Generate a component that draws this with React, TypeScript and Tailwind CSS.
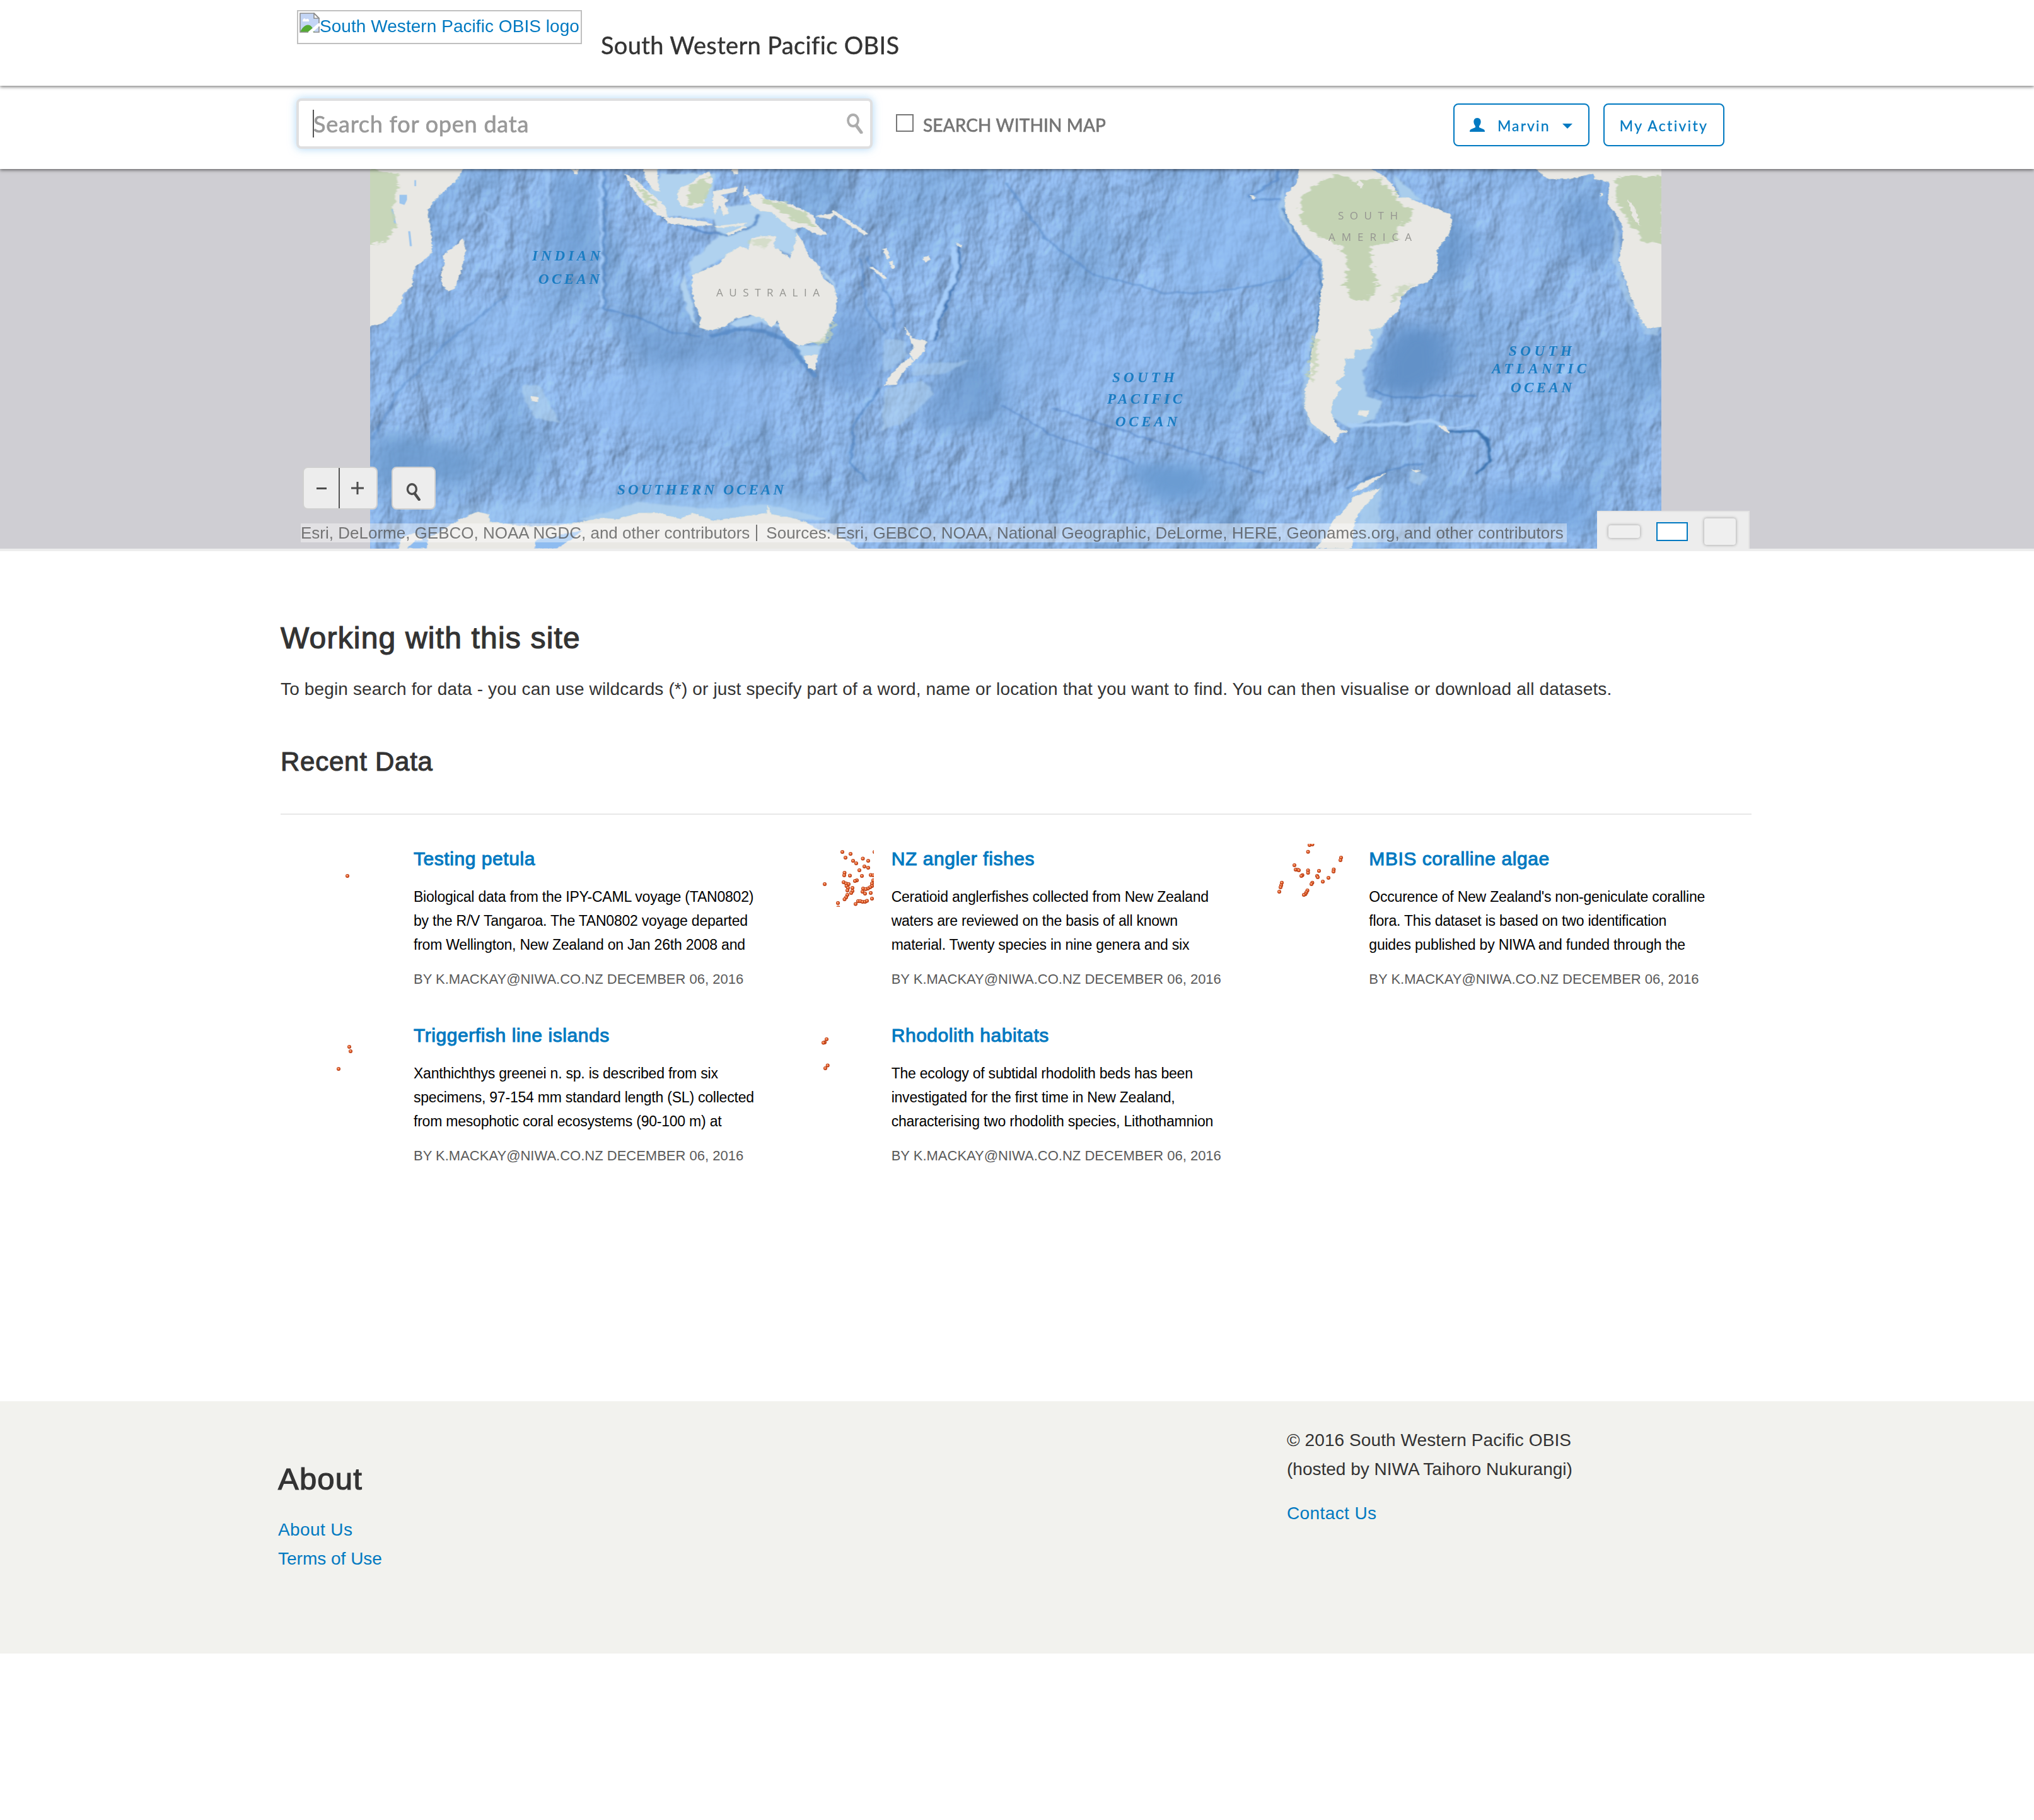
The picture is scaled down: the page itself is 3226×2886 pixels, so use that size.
type Dot = [number, number];
type Card = { title: string; lines: string[]; dots: Dot[] };

const cards: Card[] = [
  {
    title: "Testing petula",
    lines: [
      "Biological data from the IPY-CAML voyage (TAN0802)",
      "by the R/V Tangaroa. The TAN0802 voyage departed",
      "from Wellington, New Zealand on Jan 26th 2008 and",
    ],
    dots: [[73, 51]],
  },
  {
    title: "NZ angler fishes",
    lines: [
      "Ceratioid anglerfishes collected from New Zealand",
      "waters are reviewed on the basis of all known",
      "material. Twenty species in nine genera and six",
    ],
    dots: [
      [72, 64], [100, 13], [113, 16], [105, 22], [117, 27], [122, 31], [132.5, 23.5], [141, 27], [151, 13], [135, 36], [141, 38],
      [127, 42], [103.5, 46], [103, 50], [112, 50.5], [131, 51], [145, 49.5], [149, 50], [123, 58], [120, 59], [102, 61], [106, 63],
      [110, 64], [106.6, 67], [109, 70], [116, 70], [108, 74], [116, 75], [114, 78], [108, 81], [106, 85], [103.5, 88], [93, 94],
      [93.5, 101], [149, 58], [147, 63], [147, 67], [144, 69], [140.5, 71], [133, 71], [137, 72], [132, 76], [136, 79], [145, 78],
      [147, 87], [125, 91], [128.5, 91], [132, 92], [136, 92], [139, 90.5], [121, 95.5],
    ],
  },
  {
    title: "MBIS coralline algae",
    lines: [
      "Occurence of New Zealand's non-geniculate coralline",
      "flora. This dataset is based on two identification",
      "guides published by NIWA and funded through the",
    ],
    dots: [
      [84, 2], [88.5, 1], [81.6, 12.7], [134, 22], [133, 26], [60, 34], [62, 41], [65.4, 41.3], [67, 42], [81.6, 42.3], [81.6, 46],
      [99, 43], [122.4, 40.7], [122, 44], [72.7, 49.7], [71, 51], [96, 51], [97, 53], [114, 54], [105, 60], [88.4, 61.7], [87, 64],
      [40, 61.7], [39, 66], [38, 69], [36, 76], [80.6, 74], [79, 77], [77.5, 79.7], [75, 81],
    ],
  },
  {
    title: "Triggerfish line islands",
    lines: [
      "Xanthichthys greenei n. sp. is described from six",
      "specimens, 97-154 mm standard length (SL) collected",
      "from mesophotic coral ecosystems (90-100 m) at",
    ],
    dots: [[76, 42], [78, 49], [59, 77]],
  },
  {
    title: "Rhodolith habitats",
    lines: [
      "The ecology of subtidal rhodolith beds has been",
      "investigated for the first time in New Zealand,",
      "characterising two rhodolith species, Lithothamnion",
    ],
    dots: [[75, 30], [72, 35], [70, 35.5], [76.7, 71.6], [73, 76]],
  },
];

function Thumb({ dots }: { dots: Dot[] }) {
  return (
    <svg className="mt-[2px] mr-7 h-[100px] w-[150px] shrink-0" viewBox="0 0 150 100">
      {dots.map(([x, y], i) => (
        <g key={i}>
          <circle cx={x} cy={y} r="3" fill="#b5380f" />
          <circle cx={x - 0.2} cy={y - 0.3} r="2" fill="#ee7340" />
          <circle cx={x - 0.5} cy={y - 0.8} r="1" fill="#fbb28c" />
        </g>
      ))}
    </svg>
  );
}

function Magnifier({ className }: { className: string }) {
  return (
    <svg className={className} viewBox="0 0 28 32" fill="none" stroke="currentColor">
      <ellipse cx="11" cy="11" rx="8" ry="9" strokeWidth="3.8" />
      <path d="M16 19l8 11" strokeWidth="5" strokeLinecap="round" />
    </svg>
  );
}

function BrokenImage() {
  return (
    <svg className="mt-[2px] ml-[2px] h-8 w-8 shrink-0" viewBox="0 0 32 32">
      <path d="M1 1h22l8 8v22H1z" fill="#c3d5f5" />
      <path d="M5 13c0-4 4-5 5-2 3-3 6 0 5 3H5z" fill="#fff" />
      <path d="M1 31c4-9 10-13 15-11 3 1 6 6 8 11z" fill="#54ab34" />
      <path d="M32 15v6L20 32h-8z" fill="#fff" />
      <path d="M23 1v8h8z" fill="#fff" stroke="#8e8e8e" strokeWidth="1.6" />
      <path d="M31 17V9l-8-8H1v30h13M22 31h9v-9" fill="none" stroke="#8e8e8e" strokeWidth="1.6" />
    </svg>
  );
}

const mapLabels: [string, number, number, number, boolean][] = [
  ["INDIAN", 844, 413, 108, true],
  ["OCEAN", 854, 450, 97, true],
  ["AUSTRALIA", 1136, 470, 164, false],
  ["SOUTHERN OCEAN", 979, 784, 264, true],
  ["SOUTH", 1764, 606, 99, true],
  ["PACIFIC", 1756, 640, 119, true],
  ["OCEAN", 1769, 676, 98, true],
  ["SOUTH", 2122, 348, 95, false],
  ["AMERICA", 2107, 382, 132, false],
  ["SOUTH", 2393, 564, 100, true],
  ["ATLANTIC", 2366, 592, 150, true],
  ["OCEAN", 2396, 622, 97, true],
];

function WorldMap() {
  return (
    <svg className="mx-auto block h-[602px] w-[2048px] -translate-x-[2px]" viewBox="587 268 2048 602">
      <defs>
        <filter id="relief" x="0" y="0" width="100%" height="100%" colorInterpolationFilters="sRGB">
          <feTurbulence type="fractalNoise" baseFrequency="0.024 0.016" numOctaves="4" seed="11" result="n" />
          <feDiffuseLighting in="n" surfaceScale="5.5" diffuseConstant="1.22" lightingColor="#94bbee" result="l">
            <feDistantLight azimuth="225" elevation="54" />
          </feDiffuseLighting>
          <feGaussianBlur stdDeviation="0.7" />
        </filter>
        <filter id="swell" x="0" y="0" width="100%" height="100%" colorInterpolationFilters="sRGB">
          <feTurbulence type="fractalNoise" baseFrequency="0.006 0.005" numOctaves="3" seed="21" />
          <feColorMatrix values="0 0 0 0 0.4  0 0 0 0 0.59  0 0 0 0 0.79  2.6 0 0 0 -1.1" />
        </filter>
        <filter id="rough" x="-5%" y="-5%" width="110%" height="110%">
          <feTurbulence type="fractalNoise" baseFrequency="0.09" numOctaves="3" seed="4" />
          <feDisplacementMap in="SourceGraphic" scale="9" xChannelSelector="R" yChannelSelector="G" />
        </filter>
        <filter id="soft" x="-20%" y="-20%" width="140%" height="140%">
          <feGaussianBlur stdDeviation="30" />
        </filter>
        <filter id="soft2" x="-20%" y="-20%" width="140%" height="140%">
          <feTurbulence type="fractalNoise" baseFrequency="0.03" numOctaves="3" seed="9" />
          <feDisplacementMap in="SourceGraphic" scale="16" xChannelSelector="R" yChannelSelector="G" />
          <feGaussianBlur stdDeviation="2.5" />
        </filter>
        <filter id="veg" x="-10%" y="-10%" width="120%" height="120%">
          <feTurbulence type="fractalNoise" baseFrequency="0.05" numOctaves="4" seed="8" />
          <feDisplacementMap in="SourceGraphic" scale="34" xChannelSelector="R" yChannelSelector="G" />
          <feGaussianBlur stdDeviation="1.5" />
        </filter>
      </defs>
      <rect x="587" y="268" width="2048" height="602" fill="#82abdb" />
      <rect x="587" y="268" width="2048" height="602" filter="url(#relief)" opacity="0.68" />
      <rect x="587" y="268" width="2048" height="602" filter="url(#swell)" opacity="0.45" />

      {/* basins and shelves, western half */}
      <g transform="translate(560 260) scale(.657 .3954)">
        <g filter="url(#soft)">
          <path d="M480 30h110v320l-60 60-70-80z" fill="#6d9cd3" opacity=".6" />
          <path d="M600 590l140 70 120 20 120-30 90 80 30 90-200 10-200-30z" fill="#6796cc" opacity=".5" />
          <path d="M41 1080l170 20 100 80-40 90-230 20z" fill="#6a9ace" opacity=".8" />
          <path d="M1170 560l60 20 50 200-20 120-80 20-60-60z" fill="#6896cf" opacity=".5" />
          <path d="M1420 820l148-10v230l-140 40-70-40z" fill="#6a98cf" opacity=".6" />
          <path d="M560 870l330-100 150 60v200l-300 60-200-60z" fill="#8fbcf2" opacity=".55" />
          <path d="M260 560l250 10-80 200-180 20z" fill="#8fbcf2" opacity=".5" />
          <path d="M200 1400l400-50 500-10 100 90H200z" fill="#9cc6f2" opacity=".9" />
        </g>
        <g filter="url(#soft2)" fill="#b0d2ef">
          <path d="M740 40l130 0 0 140 130-30 60 100 25 60-15 60-80-40-110 60-60 60-10-50 70-110-10-70-110-10-60-60z" />
          <path d="M800 440l15 90 15 110 10 30-30-70-20-100zM1100 380l50 70 20 60-12-20z" />
          <path d="M910 640l60-35 50 20 10 30-50-20-60 20z" />
          <path d="M1285 900l90-30 30 50-80 120-50 30z" opacity=".55" />
          <path d="M1280 700l50 10 10 60-60 70z" opacity=".5" />
          <path d="M1350 800l100-5 40-5-60 50-80 5z" opacity=".5" />
          <path d="M410 880l40 10 30 90 20 60-60-20-30-80z" opacity=".6" />
          <path d="M540 1430l150-75 160 30 150-20 150 60z" opacity=".8" />
          <path d="M1070 730h60l-10 50-35 5z" />
        </g>
        <g fill="none" strokeLinecap="round" filter="url(#soft2)">
          <path d="M1450 340q10 90-15 170t-40 190" stroke="#a5cdfa" strokeWidth="14" />
          <path d="M1462 330q8 100-18 190t-42 190" stroke="#3f74b3" strokeWidth="5" />
          <path d="M660 50l60 110 40 70 80 40 60 15 70-40 10-40" stroke="#4d80c0" strokeWidth="7" opacity=".8" />
          <path d="M607 30v550l90 40 60 50 80 20" stroke="#5386c4" strokeWidth="6" opacity=".7" />
          <path d="M598 30v540" stroke="#a3caf8" strokeWidth="6" />
          <path d="M470 30v210M320 190l40 50 5 100-30 90" stroke="#9dc7f6" strokeWidth="9" opacity=".8" />
          <path d="M600 590l-60 100-80 60-120 100-120 240" stroke="#93bff3" strokeWidth="14" opacity=".6" />
          <path d="M370 530l-140 180-120 200-60 190" stroke="#5588c6" strokeWidth="7" opacity=".5" />
          <path d="M865 690q100-60 180 20l50 100 20 40" stroke="#4f83c2" strokeWidth="14" opacity=".7" />
          <path d="M1225 380l15 200 45 100M1240 370l60 180 10 110" stroke="#5a8cca" strokeWidth="5" opacity=".7" />
          <path d="M1270 900l-60 140-10 160 40 70" stroke="#4f83c2" strokeWidth="6" opacity=".7" />
        </g>
        <g fill="#e9e8e4" stroke="#e3e6d6" strokeWidth="1" filter="url(#rough)">
          <path d="M20 10h250l-20 55-35 50-25 45-10 30 5 60 5 50v55l-15 25-25 30-7 40v40l-21 25-7 45-20 45-25 35-50 20z" />
          <path d="M265 300l7 50-10 70-17 80-15 10-15-20-2-50 9-40-7-30 25-35 15-15z" />
          <path d="M655 40l25 20 40 60 35 50 2 45-22-10-35-55-32-70z" />
          <path d="M700 15h35v60l5 35-15-5-17-40z" />
          <path d="M790 95l25-15 20-30 25-20 8 40-18 50-5 45-25 15-30-15-8-35z" />
          <path d="M750 216l40 2 60 13 18 14-46 4-62-12zM872 250l78-14-10 12-60 8zM900 282l45-34 4 6-40 32z" />
          <path d="M870 110l60-18-4 18-40 15 20 22-10 10 12 38-12 12-12-42-12 36-4-50zM945 88l12 32-16 12z" />
          <path d="M955 125l30-5 15 25 35 5 40 25 35 30 10 40 25 38-25 0-35-30-25 10-25-35-25-35-25-5-25-25z" />
          <path d="M1118 210l37-10 5-16 8 10-16 28zM1165 192l38 42 40 46-8 4-40-44-36-44z" />
          <path d="M820 445l30-20 35-25 15-35 35-35 20 15 5-45 25-10h35l-5 40 40 50 10-50 7-50 13 30 15 60 25 40 10 50 25 30 8 40-3 70-15 50-15 65h-25l-35 15-25-30-20-40-5-35-15 30-20-35-30-15-40 15-20 30-40 18-25-13 5-35-15-60-7-60z" />
          <path d="M1088 770l34-5-7 60-15-5z" />
          <path d="M1330 652l22 48 33 10-10 50-20 30-12-30 12-25z" />
          <path d="M1345 775l8 15-28 50-15 45-27 2 17-47 25-40z" />
          <path d="M1248 415l8-2 32 44-6 4zM1278 342l10-2 8 38-8 2zM1294 390l8 0 5 28-6 0zM1376 378l16-10 2 14-14 12zM1455 318l16 10-4 6zM430 932l18 4-2 18-14-4zM915 20l14 0 0 22-12-4zM528 22h18l-8 20z" />
          <path d="M105 1560l15-65 30-15 20 30 40-35 30-35 25-20 35-25 25 10 5 30 50 10 50 10 90-10 80-25 40 5 50-25h50l50 25 30-25 50 30 90-20 40-10v-30l10 35 50 15 30 15 30 30 50 25 30 30 30 35z" />
        </g>
        <g fill="#8ebcf0">
          <path d="M438 1542l4-34 50-16 60-22-20 30-40 42zM130 1542l20-30 30-10-2 40z" filter="url(#rough)" />
          <path d="M112 124h18v20l-6 20-12-6zM90 180l6 0 8 60-6 2zM133 270l5 0 4 60-5 0zM148 65h4v24h-4z" fill="#9cc5ee" />
        </g>
        <g fill="#c3d4b4" filter="url(#veg)" opacity=".9">
          <path d="M20 20l90 20-5 90-10 60 10 40-20 80-65 20z" />
          <path d="M810 90l45-45 8 40-18 70-40 15z" />
          <path d="M985 140l60 20 50 40 20 50-50-20-30-40-40-30z" />
          <path d="M680 70l50 80 10 30-30-30z" />
          <path d="M960 300h50l-10 30h-40z" opacity=".6" />
          <path d="M1105 715l30-5 20-80 6 0-10 80-26 20z" opacity=".7" />
        </g>
      </g>

      {/* basins and shelves, eastern half */}
      <g transform="translate(1590 260) scale(.676 .3954)">
        <g filter="url(#soft)">
          <path d="M870 780l60-140 120 30 10 180-100 100-90-50z" fill="#6291c8" />
          <path d="M270 1200h200l40 120-140 50z" fill="#6a9bd2" />
          <path d="M1130 1300l250-30v200h-250z" fill="#6e9ed8" opacity=".6" />
          <path d="M1000 180l60 30 60 150-60 120-80-20z" fill="#6694cc" opacity=".6" />
          <path d="M1340 120l80 60 20 160-110 60z" fill="#6694cc" opacity=".5" />
          <path d="M390 30l90 80-90 100v280l80 30 200-60 80-120-90-220z" fill="#8dbaf0" opacity=".55" />
          <path d="M1180 60h70l-10 500-90 20z" fill="#94c0f4" opacity=".6" />
          <path d="M0 560l400-60 10 200 60 200-220 60-250-60z" fill="#90bcf2" opacity=".4" />
          <path d="M900 1270l-60 270h-100l60-200z" fill="#9cc6f2" />
        </g>
        <g filter="url(#soft2)" fill="#a9cdec">
          <path d="M905 620l-25 100-35 110 5 100 40 20-20 70-60 40-60-70 30-220 60-100 50-40z" />
          <path d="M915 40l40 60 30 50-50-10z" />
          <path d="M655 90l-8 110 60 150 35 50 0 170-25 180-15 190 10 100 50 60-30-80 10-400 15-210-60-110z" opacity=".7" />
          <path d="M960 1225l40 30-20 30-30-20zM890 1290l-10 250h-50l10-160z" opacity=".7" />
          <path d="M1425 170l25 110-5 120 25 120 30 110 20 30 20-10 0 40-30-10-60-180-20-120 8-110z" opacity=".7" />
        </g>
        <g fill="none" strokeLinecap="round" filter="url(#soft2)">
          <path d="M658 180l50 160 36 60 4 120-10 180-20 90" stroke="#4679b8" strokeWidth="7" opacity=".75" />
          <path d="M815 1050l130-10 60-10 40 30" stroke="#a9cff6" strokeWidth="14" />
          <path d="M1050 1075l60-5 30 40 4 80-30 50" stroke="#3b72ae" strokeWidth="8" />
          <path d="M1040 1060l60-10" stroke="#a5cbf6" strokeWidth="8" />
          <path d="M870 910q50 40 130 20l110 0" stroke="#4d80bf" strokeWidth="6" opacity=".7" />
          <path d="M10 80l90 220 110 140 180 80 120-10 160-50 70-140" stroke="#5d8fcc" strokeWidth="6" opacity=".7" />
          <path d="M1440 420l-40 60-60 120-80 60M1400 430l-60 130-100 70" stroke="#a2c9f7" strokeWidth="9" opacity=".5" />
          <path d="M120 980l180 100 180 90 130 70M0 970l120 120 190 110" stroke="#5384c4" strokeWidth="6" opacity=".6" />
          <path d="M805 1300l80-60 60-30 40-10" stroke="#4d80bf" strokeWidth="6" opacity=".7" />
          <path d="M580 130l60-60 10-40M590 145l60-5" stroke="#5384c4" strokeWidth="7" opacity=".7" />
        </g>
        <g fill="#e9e8e4" stroke="#e3e6d6" strokeWidth="1" filter="url(#rough)">
          <path d="M697 10l-7 70-25 40-3 70 18 55 30 80 40 60 2 75-7 100-5 100-15 100-5 100-10 40v80l15 60 35 45 20 35 10-35 20-13-20-7-20-65 5-50 20-50-15-20 20-30 5-70h20v-35l40-5 3-45-8-30 30-10 15-30 25-40 5-50 25-40 40-25 20-45v-80l30-70 5-50-5-25-65-40-35-25h-20l-10-40-20-40-40-40z" />
          <path d="M1245 10l20 30 15 20h50l55-22 5 22 35 15-5 85 20 40 15 50v60l-10 80 20 90 15 80 20 70 15 30 45-10V10z" />
          <path d="M836 988l24 2-6 22-20-6zM1022 1048l14 2 14 30-10-6zM580 126l16 8-8 10zM1402 118l6 2-4 12z" />
          <path d="M885 1300l-20 45-30 55-10 45-5 97h-85l25-50 15-60 30-50 20-50zM960 1225l20 6-10 6zM840 1280l60-40-50 60-30 15z" />
        </g>
        <g fill="#c0d2b0" filter="url(#veg)" opacity=".92">
          <path d="M780 40l50 30 50-10 35 50 15 50 40 20-15 40-25 40-5 50-60 20 0 70 15 80-20 70-45-10-15-60 10-80-10-60-60-50-40-60 0-80 30-60z" />
          <path d="M1440 50h110v270l-50-10-40-100-20-60z" />
          <path d="M728 690h10v130l-15 60-4-20zM960 480l-30 60-20 20 15-70z" opacity=".7" />
        </g>
        <path d="M836 62l12 20-6 16-10-18zM1466 140l20 40 10 70-16-30z" fill="#e9e8e4" filter="url(#rough)" />
      </g>

      {mapLabels.map(([text, x, y, w, sea], i) => (
        <text
          key={i}
          x={x}
          y={y}
          textLength={w}
          className={
            sea
              ? "fill-[#1a7cc2] [font-family:'Liberation_Serif',serif] text-[23px] font-bold italic"
              : "fill-[#959591] [font-family:'Open_Sans',sans-serif] text-[17px] font-medium"
          }
        >
          {text}
        </text>
      ))}
    </svg>
  );
}

export default function App() {
  return (
    <div className="min-h-[2886px] w-full bg-white [font-family:'Liberation_Sans',Arial,sans-serif] text-[28px] text-[#333]">
      <header className="relative z-20 flex h-[136px] bg-white pl-[471px] shadow-[0_2px_5px_rgba(0,0,0,0.5)]">
        <a className="mt-4 flex h-[54px] w-[452px] border-2 border-[#c0c0c0] text-[#0079c1]">
          <BrokenImage />
          <span className="mt-[7px] leading-[34px] tracking-[0.05px] whitespace-nowrap">South Western Pacific OBIS logo</span>
        </a>
        <h1 className="mt-[46px] ml-[30px] [font-family:Lato,sans-serif] text-[38px] leading-[50px] tracking-[0.35px] whitespace-nowrap [-webkit-text-stroke:0.4px_#333]">
          South Western Pacific OBIS
        </h1>
      </header>

      <nav className="relative z-10 flex h-[132px] bg-white pl-[470px] [font-family:Lato,sans-serif] shadow-[0_2px_5px_rgba(0,0,0,0.5)]">
        <div className="mt-5 flex h-[80px] w-[914px] items-center rounded-lg border-4 border-[#dfdfe0] bg-white pr-[9px] pl-[22px] shadow-[0_0_14px_rgba(120,190,240,0.6)]">
          <span className="h-11 w-[2px] bg-[#555]" />
          <span className="-ml-[1px] text-[36px] leading-[50px] tracking-[0.77px] whitespace-nowrap text-[#999] [-webkit-text-stroke:0.7px_#999]">Search for open data</span>
          <Magnifier className="ml-auto h-8 w-[30px] text-[#adadad]" />
        </div>
        <span className="mt-[45px] ml-[37px] h-7 w-7 border-2 border-[#777]" />
        <span className="mt-[44px] ml-[15px] text-[28px] leading-9 tracking-[0.15px] whitespace-nowrap text-[#757575] [-webkit-text-stroke:0.7px_#757575]">SEARCH WITHIN MAP</span>
        <div className="mt-7 mr-[491px] ml-auto flex gap-[22px] text-[23px] text-[#0079c1] [-webkit-text-stroke:0.3px_#0079c1]">
          <button className="flex h-[68px] w-[216px] items-center rounded-lg border-2 border-[#0079c1] pl-6">
            <svg className="h-6 w-6" viewBox="0 0 24 24" fill="currentColor">
              <path d="M12 1c4 0 6 3 5.600 7-.4 3-1.600 4.500-2.600 6v2l7 3c1.500.7 2 2 2 4H0c0-2 .5-3.300 2-4l7-3v-2C8 12.500 6.800 11 6.400 8 6 4 8 1 12 1z" />
            </svg>
            <span className="mt-[2px] ml-[20px] tracking-[2.1px]">Marvin</span>
            <svg className="mt-1 ml-[19px] h-2 w-4" viewBox="0 0 16 8" fill="currentColor">
              <path d="M0 0h16L8 8z" />
            </svg>
          </button>
          <button className="flex h-[68px] w-[192px] items-center justify-center rounded-lg border-2 border-[#0079c1]">
            <span className="mt-[2px] tracking-[2.3px] whitespace-nowrap">My Activity</span>
          </button>
        </div>
      </nav>

      <section className="relative h-[606px] overflow-hidden border-b-4 border-[#ededed] bg-[#cfced3]">
        <WorldMap />
        <div className="absolute top-[472px] left-[480px] flex gap-[22px] text-[#4d4d4d]">
          <div className="flex h-[68px] w-[119px] rounded-lg border-2 border-[#d0d0d0] bg-[#ededed]">
            <span className="flex w-[57px] items-center justify-center border-r-2 border-[#555]">
              <span className="h-[3px] w-4 bg-[#4d4d4d]" />
            </span>
            <svg className="m-auto h-5 w-5 -translate-x-px" viewBox="0 0 20 20" stroke="currentColor" strokeWidth="3">
              <path d="M0 10h20M10 0v20" />
            </svg>
          </div>
          <div className="flex h-[68px] w-[70px] items-center justify-center rounded-lg border-2 border-[#d0d0d0] bg-[#ededed] pt-3">
            <Magnifier className="h-7 w-[26px]" />
          </div>
        </div>
        <div className="absolute top-[562px] left-[477px] flex h-[30px] w-[2008px] bg-white/40 text-[26px] leading-[30px] whitespace-nowrap text-[#444]/70">
          <span>Esri, DeLorme, GEBCO, NOAA NGDC, and other contributors</span>
          <span className="mx-[10px] my-[2px] w-[2px] bg-[#444]/70" />
          <span className="ml-1">Sources: Esri, GEBCO, NOAA, National Geographic, DeLorme, HERE, Geonames.org, and other contributors</span>
        </div>
        <div className="absolute top-[542px] left-[2533px] flex h-16 w-[242px] items-center gap-[26px] border-t-2 border-r-2 border-[#e3e3e3] bg-[#ededed] pl-[18px]">
          <span className="h-5 w-[50px] rounded bg-[#efefef] shadow-[0_0_4px_1px_rgba(0,0,0,0.25)]" />
          <span className="h-[30px] w-[50px] border-2 border-[#0079c1] bg-white" />
          <span className="h-[42px] w-[50px] rounded bg-[#efefef] shadow-[0_0_4px_1px_rgba(0,0,0,0.25)]" />
        </div>
      </section>

      <main className="ml-[445px] h-[1348px] w-[2333px] pt-[106px]">
        <h2 className="text-[48px] leading-[64px] tracking-[1.18px] [-webkit-text-stroke:1.2px_#333]">Working with this site</h2>
        <p className="mt-[26px] leading-[46px] tracking-[0.14px] whitespace-nowrap">
          To begin search for data - you can use wildcards (*) or just specify part of a word, name or location that you want to find. You can then visualise or download all datasets.
        </p>
        <h3 className="mt-[64px] text-[42px] leading-[56px] tracking-[0.75px] [-webkit-text-stroke:1.1px_#333]">Recent Data</h3>
        <hr className="mt-[54px] border-t-2 border-[#e8e8e8]" />
        <div className="mt-[44px] ml-[33px] grid w-[2273px] grid-cols-3">
          {cards.map((c) => (
            <article key={c.title} className="flex h-[280px]">
              <Thumb dots={c.dots} />
              <div className="whitespace-nowrap">
                <h4 className="text-[30px] leading-[52px] tracking-[0.56px] text-[#0079c1] [-webkit-text-stroke:1px_#0079c1]">{c.title}</h4>
                <p className="mt-[15px] text-[23px] leading-[38px] tracking-[-0.22px] text-black">
                  {c.lines.map((l) => (
                    <span key={l} className="block">{l}</span>
                  ))}
                </p>
                <p className="mt-[16px] text-[22px] leading-10 text-[#5a5a5a]">BY K.MACKAY@NIWA.CO.NZ DECEMBER 06, 2016</p>
              </div>
            </article>
          ))}
        </div>
      </main>

      <footer className="flex h-[400px] bg-[#f2f2ee] pl-[441px] leading-[46px]">
        <div className="w-[1600px] pt-[93px]">
          <h2 className="text-[49px] leading-[60px] tracking-[1.2px] [-webkit-text-stroke:1.2px_#333]">About</h2>
          <ul className="mt-[28px] text-[#0079c1]">
            <li className="tracking-[0.4px]">About Us</li>
            <li>Terms of Use</li>
          </ul>
        </div>
        <div className="pt-[39px]">
          <p className="tracking-[0.09px]">© 2016 South Western Pacific OBIS</p>
          <p>(hosted by NIWA Taihoro Nukurangi)</p>
          <p className="mt-6 tracking-[0.4px] text-[#0079c1]">Contact Us</p>
        </div>
      </footer>
    </div>
  );
}
